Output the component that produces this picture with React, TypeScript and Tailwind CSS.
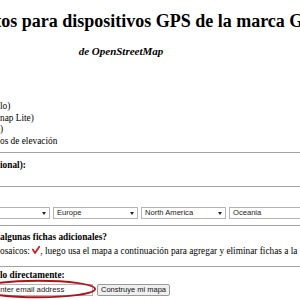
import React from 'react';

const regions = ['Asia', 'Europe', 'North America', 'Oceania'];

const Rule: React.FC<{ className?: string }> = ({ className = '' }) => (
  <div className={`h-px w-full bg-[#a3a3a3] ${className}`} />
);

const RegionSelect: React.FC<{ label: string; className?: string }> = ({ label, className = '' }) => (
  <div className={`relative shrink-0 w-[85px] h-[12px] ${className}`}>
    <select
      defaultValue={label}
      className="block appearance-none w-full h-full border border-[#b4b4b4] bg-white pl-[3px] py-0 text-[7.6px] leading-[10px] text-[#222] font-['Liberation_Sans',Arial,sans-serif] outline-none"
    >
      <option>{label}</option>
    </select>
    <svg className="absolute right-[4px] top-[4.5px]" width="4" height="3" viewBox="0 0 4 3">
      <path d="M0 0 H4 L2 3 Z" fill="#222" />
    </svg>
  </div>
);

export default function App() {
  return (
    <div className="relative w-[300px] h-[300px] overflow-hidden bg-white text-black text-[9.3px] leading-[11.5px] font-['Liberation_Serif','Times_New_Roman',serif]">
      {/* centred heading, wider than the viewport */}
      <div className="-ml-[200px] w-[642px] text-center pt-[11px]">
        <h1 className="text-[18px] leading-[21px] font-bold whitespace-nowrap">
          Mapas gratuitos para dispositivos GPS de la marca Garmin
        </h1>
        <p className="mt-[13px] text-[11px] leading-[13px] font-bold italic">de OpenStreetMap</p>
      </div>

      <div className="mt-[43px] leading-[11.7px] whitespace-nowrap">
        <div>lo)</div>
        <div>nap Lite)</div>
        <div>)</div>
        <div>os de elevación</div>
      </div>

      <Rule className="mt-[4px]" />
      <div className="mt-[7px] font-bold">ional):</div>
      <Rule className="mt-[15px]" />

      <div className="mt-[20px] flex gap-[3px]">
        {regions.map((r, i) => (
          <RegionSelect key={r} label={r} className={i === 0 ? '-ml-[35px]' : ''} />
        ))}
      </div>

      <Rule className="mt-[6px]" />
      <div className="mt-[6px] font-bold whitespace-nowrap">algunas fichas adicionales?</div>
      <div className="mt-[2.5px] whitespace-nowrap">
        osaicos:{' '}
        <svg className="inline-block align-baseline" width="8" height="8" viewBox="0 0 8 8">
          <path d="M0.8 3.6 L3 7 L7.4 0.6" fill="none" stroke="#d0202a" strokeWidth="1.8" strokeLinecap="round" strokeLinejoin="round" />
        </svg>
        , luego usa el mapa a continuación para agregar y eliminar fichas a la selección
      </div>
      <Rule className="mt-[8px]" />
      <div className="mt-[3.5px] font-bold whitespace-nowrap">lo directamente:</div>

      <div className="mt-[2px] flex gap-[4px] items-center">
        <input
          readOnly
          value="Enter email address"
          className="-ml-[8px] w-[101px] h-[12px] border border-[#b4b4b4] pl-[2px] text-[7.8px] text-[#222] font-['Liberation_Sans',Arial,sans-serif] outline-none"
        />
        <button className="w-[73px] h-[12px] border border-[#9a9a9a] rounded-[2px] bg-[#efefef] text-[7.5px] leading-[10px] text-[#111] font-['Liberation_Sans',Arial,sans-serif]">
          Construye mi mapa
        </button>
      </div>

      {/* red hand-drawn annotation round the email field */}
      <svg className="absolute left-0 top-0 pointer-events-none" width="300" height="300" viewBox="0 0 300 300">
        <ellipse cx="38" cy="289" rx="57" ry="8.3" fill="none" stroke="#b3121c" strokeWidth="2" />
      </svg>
    </div>
  );
}
